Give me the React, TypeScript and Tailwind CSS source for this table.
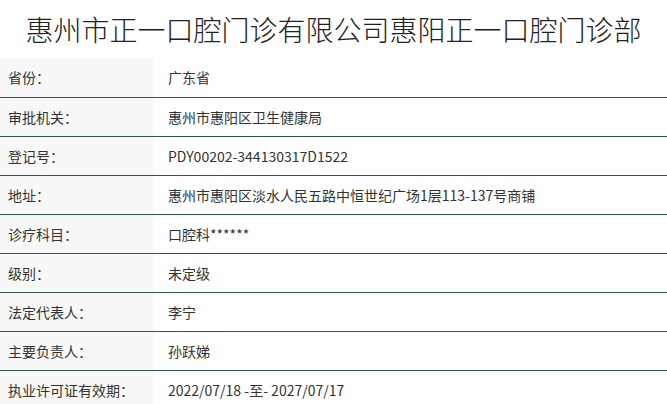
const rows: [string, string][] = [
  ['省份：', '广东省'],
  ['审批机关：', '惠州市惠阳区卫生健康局'],
  ['登记号：', 'PDY00202-344130317D1522'],
  ['地址：', '惠州市惠阳区淡水人民五路中恒世纪广场1层113-137号商铺'],
  ['诊疗科目：', '口腔科******'],
  ['级别：', '未定级'],
  ['法定代表人：', '李宁'],
  ['主要负责人：', '孙跃娣'],
  ['执业许可证有效期：', '2022/07/18 -至- 2027/07/17'],
]

export default function App() {
  return (
    <div
      className="w-[667px] h-[404px] overflow-hidden bg-white text-[#333]"
      style={{ fontFamily: '"Noto Sans CJK SC", "Noto Sans", sans-serif' }}
    >
      {/* Title */}
      <div className="h-[58px] flex items-center justify-center">
        <h1 className="text-[28px] leading-none text-[#222] font-light">
          惠州市正一口腔门诊有限公司惠阳正一口腔门诊部
        </h1>
      </div>

      {/* Info table */}
      <div>
        {rows.map(([label, value], i) => (
          <div
            key={label}
            className={`flex h-[39px] ${i > 0 ? 'border-t border-[#2b5a45]' : ''}`}
          >
            <div className="w-[154px] shrink-0 bg-[#f8f8f8] flex items-center pl-2 text-[14px]">
              {label}
            </div>
            <div className="flex-1 flex items-center pl-[14px] text-[14px]">{value}</div>
          </div>
        ))}
      </div>
    </div>
  )
}
